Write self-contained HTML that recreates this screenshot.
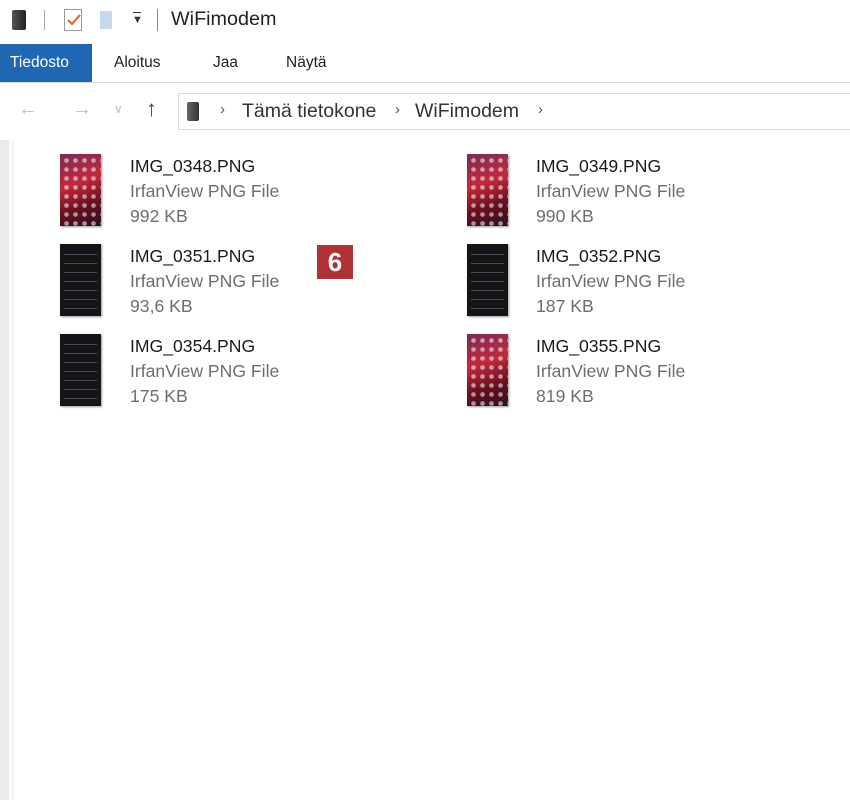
<!DOCTYPE html>
<html><head><meta charset="utf-8"><style>
*{margin:0;padding:0;box-sizing:border-box}
body{width:850px;height:800px;background:#fff;position:relative;overflow:hidden;font-family:"Liberation Sans","DejaVu Sans",sans-serif;color:#1a1a1a}
.a{position:absolute}
.tab{position:absolute;top:44px;height:38px;line-height:38px;font-size:15.5px;color:#222}
.ph{position:absolute;width:41px;height:72px;box-shadow:1px 1px 2px #999}
.red{background:
 radial-gradient(circle,rgba(255,255,255,.55) 0 2px,transparent 2.6px) 2px 2px/9px 9px,
 linear-gradient(160deg,#7a2a5a,#c22a3a 40%,#6a1020 70%,#2a1020);}
.dark{background:
 repeating-linear-gradient(180deg,transparent 0 6px,rgba(120,140,160,.45) 6px 7px,transparent 7px 9px) 4px 4px/33px 64px no-repeat,
 #151518}
.t{position:absolute;font-size:17.6px;line-height:25px}
.t div:nth-child(1){color:#1a1a1a}
.t div:nth-child(n+2){color:#6d6d6d}
</style></head><body>
<div class="a" style="left:12px;top:10px;width:14px;height:20px;background:linear-gradient(90deg,#555,#222);border-radius:2px"></div>
<div class="a" style="left:44px;top:10px;width:1px;height:20px;background:#aaa"></div>
<div class="a" style="left:64px;top:9px;width:18px;height:22px;border:1px solid #999;background:#fff"></div>
<svg class="a" style="left:66px;top:12px" width="16" height="16"><path d="M2 8 L6 12 L14 3" stroke="#e06030" stroke-width="2" fill="none"/></svg>
<div class="a" style="left:100px;top:11px;width:12px;height:18px;background:#c8d8ec"></div>
<div class="a" style="left:132px;top:14px;font-size:11px;color:#333">&#9660;</div>
<div class="a" style="left:133px;top:12px;width:8px;height:1px;background:#333"></div>
<div class="a" style="left:157px;top:9px;width:1px;height:22px;background:#888"></div>
<div class="a" style="left:171px;top:8px;font-size:19.8px;color:#222">WiFimodem</div>
<div class="a" style="left:0;top:44px;width:92px;height:38px;background:#1f66b3"></div>
<div class="tab" style="left:10px;color:#fff">Tiedosto</div>
<div class="tab" style="left:114px">Aloitus</div>
<div class="tab" style="left:213px">Jaa</div>
<div class="tab" style="left:286px">Näytä</div>
<div class="a" style="left:0;top:82px;width:850px;height:1px;background:#dcdcdc"></div>
<div class="a" style="left:18px;top:98px;font-size:20px;color:#c0c0c0">&#8592;</div>
<div class="a" style="left:72px;top:98px;font-size:20px;color:#c0c0c0">&#8594;</div>
<div class="a" style="left:114px;top:102px;font-size:12px;color:#c0c0c0">&#8744;</div>
<div class="a" style="left:146px;top:96px;font-size:22px;color:#444">&#8593;</div>
<div class="a" style="left:178px;top:93px;width:680px;height:37px;border:1px solid #d9d9d9"></div>
<div class="a" style="left:187px;top:102px;width:12px;height:19px;background:linear-gradient(90deg,#666,#333);border-radius:2px"></div>
<div class="a" style="left:220px;top:101px;font-size:15px;color:#555">&#8250;</div>
<div class="a" style="left:242px;top:100px;font-size:19.5px;color:#333">Tämä tietokone</div>
<div class="a" style="left:395px;top:101px;font-size:15px;color:#555">&#8250;</div>
<div class="a" style="left:415px;top:100px;font-size:19.5px;color:#333">WiFimodem</div>
<div class="a" style="left:538px;top:101px;font-size:15px;color:#555">&#8250;</div>
<div class="a" style="left:0;top:140px;width:9px;height:660px;background:#ebebeb"></div>
<div class="a" style="left:12px;top:140px;width:2px;height:660px;background:#f3f3f3"></div>
<div class="ph red" style="left:60px;top:154px"></div>
<div class="t" style="left:130px;top:154px"><div>IMG_0348.PNG</div><div>IrfanView PNG File</div><div>992 KB</div></div>
<div class="ph red" style="left:467px;top:154px"></div>
<div class="t" style="left:536px;top:154px"><div>IMG_0349.PNG</div><div>IrfanView PNG File</div><div>990 KB</div></div>
<div class="ph dark" style="left:60px;top:244px"></div>
<div class="t" style="left:130px;top:244px"><div>IMG_0351.PNG</div><div>IrfanView PNG File</div><div>93,6 KB</div></div>
<div class="ph dark" style="left:467px;top:244px"></div>
<div class="t" style="left:536px;top:244px"><div>IMG_0352.PNG</div><div>IrfanView PNG File</div><div>187 KB</div></div>
<div class="ph dark" style="left:60px;top:334px"></div>
<div class="t" style="left:130px;top:334px"><div>IMG_0354.PNG</div><div>IrfanView PNG File</div><div>175 KB</div></div>
<div class="ph red" style="left:467px;top:334px"></div>
<div class="t" style="left:536px;top:334px"><div>IMG_0355.PNG</div><div>IrfanView PNG File</div><div>819 KB</div></div>
<div class="a" style="left:317px;top:245px;width:36px;height:34px;background:#b03236;color:#fff;font-weight:bold;font-size:26px;line-height:34px;text-align:center">6</div>
</body></html>
